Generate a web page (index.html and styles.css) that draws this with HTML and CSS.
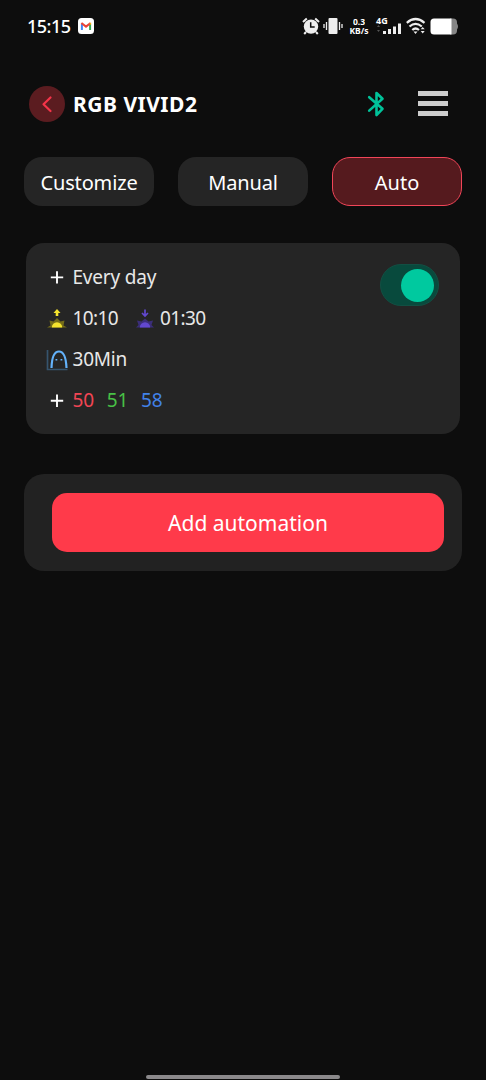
FILE: index.html
```html
<!DOCTYPE html>
<html lang="en">
<head>
<meta charset="utf-8">
<title>RGB VIVID2</title>
<link rel="stylesheet" href="styles.css">
</head>
<body>
<div class="screen">
  <div class="status">
    <span class="clock">15:15</span>
    <svg class="mail" width="16" height="16" viewBox="0 0 16 16"><rect width="16" height="16" rx="3.5" fill="#fff"/><path d="M3.9 12V6" stroke="#4285f4" stroke-width="2"/><path d="M12.1 12V6" stroke="#34a853" stroke-width="2"/><path d="M3.4 5L8 8.6 12.6 5" fill="none" stroke="#ea4335" stroke-width="2.1"/><path d="M11.2 6.1l1.9-1.6v2.3" fill="#fbbc04"/></svg>
    <div class="indicators">
      <svg class="alarm" width="18" height="18" viewBox="0 0 18 18"><circle cx="9" cy="9.6" r="7.2" fill="#eee"/><path d="M1 5L4.8 1.4M17 5L13.2 1.4M4 15l-1.8 2M14 15l1.8 2" stroke="#eee" stroke-width="2"/><path d="M8.7 5.3V10h4" fill="none" stroke="#0d0d0d" stroke-width="1.5"/></svg>
      <svg class="vibrate" width="20" height="18" viewBox="0 0 20 18"><rect x="5.5" y="1" width="9" height="16" rx="1" fill="#eee"/><path d="M3.5 5v8M16.5 5v8M1 7v4M19 7v4" stroke="#eee" stroke-width="1.3"/></svg>
      <div class="speed"><span>0.3</span><span>KB/s</span></div>
      <div class="cell"><span class="gen">4G</span>
        <svg width="26" height="13" viewBox="0 0 26 13"><path d="M1 5h3L2.5 3zM1 8h3l-1.500 2z" fill="#555"/><path d="M7 9h3v3H7zM12 7h3v5h-3zM17 4.500h3V12h-3zM22 1.500h3V12h-3z" fill="#eee"/></svg></div>
      <svg class="wifi" width="20" height="18" viewBox="0 0 20 18"><g fill="none" stroke="#eee" stroke-width="2.200"><path d="M.8 5.800Q9.500-1.800 18.500 5.800M3.500 9.500Q9.500 4.300 15.800 9.500M6.300 13Q9.500 10 13 13"/></g><path d="M7.500 14.500h4L9.500 17zM14.700 12.300h4L16.700 10zM14.700 14h4l-2 2.500z" fill="#eee"/></svg>
      <svg class="battery" width="29" height="17" viewBox="0 0 29 17"><path d="M20 .5h3Q27 .5 27 4.500v8Q27 16.500 23 16.500h-3z" fill="#858585"/><path d="M27 5.500q2 3 0 6z" fill="#858585"/><path d="M4 .5H21.500v16H4Q.5 16.500 .5 13V4Q.5 .5 4 .5z" fill="#fff"/></svg>
    </div>
  </div>

  <header class="header">
    <div class="back"><svg width="36" height="36" viewBox="0 0 36 36"><path d="M21.500 11.500L14.500 18.300 21.500 25" fill="none" stroke="#f43449" stroke-width="2.200" stroke-linecap="round" stroke-linejoin="round"/></svg></div>
    <h1 class="title">RGB VIVID2</h1>
    <svg class="bluetooth" width="18" height="28" viewBox="0 0 18 28"><path d="M2.200 7.200L15.500 18.800 9.500 25V3L15.500 8.800 2.200 20.600" fill="none" stroke="#00c39a" stroke-width="2.600" stroke-linecap="round" stroke-linejoin="round"/></svg>
    <div class="menu"><i></i><i></i><i></i></div>
  </header>

  <nav class="tabs">
    <div class="tab"><span>Customize</span></div>
    <div class="tab"><span>Manual</span></div>
    <div class="tab active"><span>Auto</span></div>
  </nav>

  <section class="card">
    <div class="rows">
      <div class="row"><svg class="icon" width="22" height="22" viewBox="0 0 22 22"><path d="M11 4.200v12.400M4.800 10.400h12.400" stroke="#fff" stroke-width="1.900"/></svg><span class="day">Every day</span></div>
      <div class="row">
        <svg class="icon" width="22" height="22" viewBox="0 0 22 22"><path d="M1 19.500L4.500 17.500 3.500 12.500 7.500 13.500 11 10 14.500 13.500 18.500 12.500 17.500 17.500 21 19.500z" fill="#756d19"/><path d="M5.800 19.500a5.200 5.200 0 0 1 10.400 0z" fill="#f5e42e"/><path d="M11 1L14.500 5H12.300V8H9.700V5H7.500z" fill="#f5e42e"/></svg>
        <span class="time">10:10</span>
        <svg class="icon set" width="22" height="22" viewBox="0 0 22 22"><path d="M2 19.500L4.500 17 3 12.500 7.500 13.500 11 10.500 14.500 13.500 19 12.500 17.500 17 20 19.500z" fill="#3b2e79"/><path d="M5.800 19.500a5.200 5.200 0 0 1 10.400 0z" fill="#6248cf"/><path d="M11 1.500v6M8 5l3 3 3-3" fill="none" stroke="#6248cf" stroke-width="1.700"/></svg>
        <span class="time">01:30</span>
      </div>
      <div class="row"><svg class="icon" width="22" height="22" viewBox="0 0 22 22"><path d="M1.500 1v19.500H21.500" fill="none" stroke="#36546d" stroke-width="1.700"/><path d="M5.500 19C5.700 12 7 2.500 13 2.500S20.200 12 20.500 19" fill="none" stroke="#63b2fa" stroke-width="2.200"/><path d="M9.500 10.700h1.800M14.500 10.700h1.800" stroke="#63b2fa" stroke-width="1.600"/></svg><span class="mins">30Min</span></div>
      <div class="row"><svg class="icon" width="22" height="22" viewBox="0 0 22 22"><path d="M11 4.500v12.400M4.800 10.700h12.400" stroke="#fff" stroke-width="1.900"/></svg><span class="level red">50</span><span class="level green">51</span><span class="level blue">58</span></div>
    </div>
    <div class="toggle"><div class="knob"></div></div>
  </section>

  <section class="panel"><div class="add"><span>Add automation</span></div></section>
  <div class="home"></div>
</div>
</body>
</html>
```
FILE: styles.css
```css
* { box-sizing: border-box; }
body { margin: 0; background: #0d0d0d; color: #fff; font-family: "Noto Sans", sans-serif; }
.screen { width: 486px; height: 1080px; display: flex; flex-direction: column; overflow: hidden; }
svg { display: block; flex: none; }

.status { height: 52px; padding: 0 27px; display: flex; align-items: center; }
.clock { font-size: 18px; font-weight: 500; line-height: 24px; width: 51px; letter-spacing: -0.5px; }
.indicators { margin-left: auto; display: flex; align-items: center; height: 24px; }
.vibrate { margin-left: 3px; }
.speed { display: flex; flex-direction: column; align-items: center; width: 24px; margin-left: 4px; font-size: 8.5px; font-weight: 700; line-height: 9px; white-space: nowrap; }
.speed span { height: 9px; overflow: hidden; }
.cell { display: flex; flex-direction: column; margin-left: 5px; width: 26px; height: 18px; }
.gen { font-size: 9px; font-weight: 700; line-height: 7px; height: 5px; }
.wifi { margin-left: 4px; }
.battery { margin-left: 4px; }

.header { height: 103px; padding-left: 29px; padding-right: 38px; display: flex; align-items: center; }
.back { width: 36px; height: 36px; border-radius: 50%; background: #5b1c20; }
.title { margin: 0 auto 0 8px; font-size: 21px; line-height: 28px; font-weight: 700; white-space: nowrap; letter-spacing: 0.5px; }
.menu { width: 30px; height: 25px; margin-left: 33px; display: flex; flex-direction: column; justify-content: space-between; }
.menu i { height: 5px; background: #ccc; }

.tabs { display: flex; gap: 24px; padding: 0 24px; margin-top: 2px; }
.tab { width: 130px; height: 49px; border-radius: 18px; background: #252525; display: flex; align-items: center; justify-content: center; font-size: 20px; padding-top: 1px; letter-spacing: -0.15px; }
.active { background: #551a1e; border: 1.500px solid #f14558; letter-spacing: 0; }

.card { margin: 37px 26px 0; height: 191px; border-radius: 18px; background: #252525; display: flex; justify-content: space-between; padding: 14px 21px 0 20px; }
.row { height: 41px; display: flex; align-items: center; font-size: 19px; line-height: 41px; color: #e8e8e8; }
.icon { margin-right: 4.500px; }
.day, .mins { letter-spacing: -0.2px; }
.time { letter-spacing: -0.6px; }
.set { margin-left: 15.500px; }
.level { margin-right: 12.500px; }
.red { color: #f14554; }
.green { color: #48c146; }
.blue { color: #4282e8; }
.toggle { margin-top: 7px; width: 59px; height: 42px; border-radius: 21px; background: #084a3d; border: 1px solid #124f43; display: flex; align-items: center; justify-content: flex-end; padding-right: 4px; }
.knob { width: 33px; height: 33px; border-radius: 50%; background: #00c99f; }

.panel { margin: 40px 24px 0; height: 97px; border-radius: 20px; background: #222; padding: 19px 18px 0 28px; }
.add { height: 59px; border-radius: 15px; background: #ff3a4a; display: flex; align-items: center; justify-content: center; font-size: 21px; }
.home { width: 194px; height: 4px; border-radius: 2px; background: #8b898b; margin: auto auto 1px; }
```
